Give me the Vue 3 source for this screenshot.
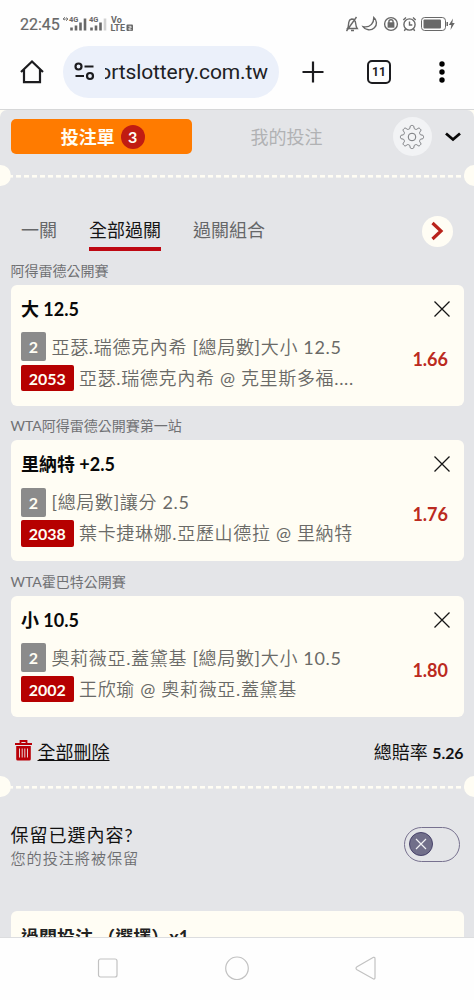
<script setup>
import { ref } from 'vue';

const tabs = ['一關', '全部過關', '過關組合'];
const activeTab = ref('全部過關');
const keepSelection = ref(false);

const bets = ref([
  {
    league: '阿得雷德公開賽',
    pick: '大 12.5',
    legs: '2',
    market: '亞瑟.瑞德克內希 [總局數]大小 12.5',
    code: '2053',
    match: '亞瑟.瑞德克內希 @ 克里斯多福....',
    odds: '1.66',
  },
  {
    league: 'WTA阿得雷德公開賽第一站',
    pick: '里納特 +2.5',
    legs: '2',
    market: '[總局數]讓分 2.5',
    code: '2038',
    match: '葉卡捷琳娜.亞歷山德拉 @ 里納特',
    odds: '1.76',
  },
  {
    league: 'WTA霍巴特公開賽',
    pick: '小 10.5',
    legs: '2',
    market: '奧莉薇亞.蓋黛基 [總局數]大小 10.5',
    code: '2002',
    match: '王欣瑜 @ 奧莉薇亞.蓋黛基',
    odds: '1.80',
  },
]);

const removeBet = (code) => {
  bets.value = bets.value.filter((bet) => bet.code !== code);
};

// gear outline with eight rounded teeth
const gearPoints = Array.from({ length: 160 }, (_, i) => {
  const angle = (i / 160) * Math.PI * 2;
  const radius = 10 + 1.6 * Math.tanh(2 * Math.cos(8 * angle));
  return `${(radius * Math.sin(angle)).toFixed(2)},${(radius * Math.cos(angle)).toFixed(2)}`;
}).join(' ');
</script>

<template>
  <div class="screen">
    <header class="status-bar">
      <span class="clock">22:45</span>
      <svg class="signals" width="74" height="20" viewBox="0 0 74 20">
        <path d="M1 5h5M3 3l-2 2 2 1M4 3.5l2 1.5-2 2" class="thin" />
        <text x="7" y="8" class="tiny">4G</text>
        <path d="M9.500 13.500v3M14 11.500v5M18.500 8.500v8M23 4.500v12" class="bar" />
        <text x="27" y="8" class="tiny">4G</text>
        <path d="M29.500 13.500v3M34 11.500v5M38.500 8.500v8" class="bar" />
        <path d="M43 4.500v12" class="bar faint" />
        <text x="49" y="9" class="volte">Vo</text>
        <text x="48.500" y="17" class="volte">LTE</text>
        <rect x="64.500" y="10.500" width="6.500" height="6.500" rx="1" fill="#686868" />
        <path d="M66.500 12.300h2.500v1.700h-2v1.800h2.500" stroke="#fff" fill="none" stroke-width=".8" />
      </svg>
      <svg class="status-icons" width="112" height="20" viewBox="0 0 112 20">
        <g class="line">
          <path d="M1.500 14.500c1.300-1.500.8-5 1.500-7 .4-1.700 1.500-2.300 2.700-2.500 3 0 3.800 2 4 4.500.2 2 .3 3.500 1.500 5zM5 16.500h3M.5 17 10.500 3" />
          <path d="M27.800 3.500c3.200 2.400 3.600 7.500.6 10.300-3.300 3.100-9 2.600-11.400-1.200 4 .8 6.500 0 8.500-2.200 1.600-1.800 2.300-4 2.300-6.900z" />
          <circle cx="45" cy="10" r="6.400" />
          <path d="M42.900 9V7.800c0-2.700 4.200-2.700 4.200 0V9" />
          <rect x="42.300" y="9" width="5.400" height="4" fill="#686868" />
          <circle cx="63.500" cy="10.500" r="5.600" />
          <path d="M63.500 7.500v3.500h2.800M57.300 6l2.700-2.500M69.700 6 67 3.500M59.500 15l-1.200 1.800M67.500 15l1.200 1.800" />
          <rect x="75.500" y="3.500" width="24" height="13" rx="3.200" stroke-width="1" />
        </g>
        <rect x="77.500" y="5.500" width="17.500" height="9" rx="1" fill="#686868" />
        <rect x="100.500" y="8" width="1.500" height="4" fill="#686868" />
        <path d="M107 4.500 102.800 11h2.500l-.8 5 4.200-7h-2.400z" fill="#686868" />
      </svg>
    </header>

    <div class="toolbar">
      <svg class="home" width="24" height="26" viewBox="0 0 24 26">
        <path d="M1 13 12 2.500l11 10.500M4 10.500v12.700h16V10.500" />
      </svg>
      <div class="address">
        <svg width="22" height="20" viewBox="0 0 22 20">
          <circle cx="4.500" cy="4.500" r="3" />
          <path d="M10.500 4.500h9M1.500 14h8.500" />
          <circle cx="16" cy="14" r="3" />
        </svg>
        <div class="url"><span>ortslottery.com.tw</span></div>
      </div>
      <svg class="plus" width="22" height="22" viewBox="0 0 22 22"><path d="M11 .5v21M.5 11h21" /></svg>
      <div class="tab-count">11</div>
      <svg class="dots" width="8" height="24" viewBox="0 0 8 24">
        <circle cx="4" cy="4" r="2.700" /><circle cx="4" cy="12" r="2.700" /><circle cx="4" cy="20" r="2.700" />
      </svg>
    </div>

    <main class="page">
      <div class="slip">
        <div class="slip-header">
          <button class="slip-button">投注單<span class="badge">3</span></button>
          <button class="my-bets">我的投注</button>
          <span class="gear">
            <svg width="26" height="26" viewBox="-13 -13 26 26">
              <polygon :points="gearPoints" />
              <circle r="3.800" />
            </svg>
          </span>
          <svg class="chevron" width="18" height="12" viewBox="0 0 18 12"><path d="m2 2.500 7 6 7-6" /></svg>
        </div>

        <div class="divider"></div>

        <nav class="tabs">
          <button
            v-for="tab in tabs"
            :key="tab"
            :class="{ active: tab === activeTab }"
            @click="activeTab = tab"
          >{{ tab }}</button>
          <span class="next">
            <svg width="14" height="20" viewBox="0 0 14 20"><path d="m1.500 2 8.500 8-8.500 8" /></svg>
          </span>
        </nav>

        <section v-for="bet in bets" :key="bet.code" class="bet">
          <div class="league">{{ bet.league }}</div>
          <div class="card">
            <div class="pick">
              <span>{{ bet.pick }}</span>
              <svg width="18" height="18" viewBox="0 0 18 18" @click="removeBet(bet.code)"><path d="m1.500 1.500 15 15m0-15-15 15" /></svg>
            </div>
            <div class="detail">
              <div class="lines">
                <div class="line-one"><span class="legs">{{ bet.legs }}</span>{{ bet.market }}</div>
                <div class="line-two"><span class="code">{{ bet.code }}</span>{{ bet.match }}</div>
              </div>
              <span class="odds">{{ bet.odds }}</span>
            </div>
          </div>
        </section>

        <div class="summary">
          <svg width="17" height="21" viewBox="0 0 17 21">
            <path d="M5.500 3V1h6v2M0 4h17" stroke="#b90007" stroke-width="1.800" fill="none" />
            <path d="M1.200 6h14.600v13q0 1.500-1.500 1.500H2.700q-1.500 0-1.500-1.500z" fill="#b90007" />
            <path d="M4.500 8.500v9M7.200 8.500v9M9.800 8.500v9M12.500 8.500v9" stroke="#e6d2d3" stroke-width="1" />
          </svg>
          <a>全部刪除</a>
          <div class="total">總賠率 <b>5.26</b></div>
        </div>

        <div class="divider"></div>

        <div class="keep">
          <div>
            <div class="keep-title">保留已選內容?</div>
            <div class="keep-note">您的投注將被保留</div>
          </div>
          <div class="toggle" :class="{ on: keepSelection }" @click="keepSelection = !keepSelection">
            <span class="knob">
              <svg width="12" height="12" viewBox="0 0 12 12"><path d="m1 1 10 10m0-10L1 11" /></svg>
            </span>
          </div>
        </div>

        <div class="stake">過關投注 （選擇）x1</div>
      </div>
    </main>

    <footer class="nav-bar">
      <svg width="22" height="24" viewBox="0 0 22 24"><rect x="1.500" y="3" width="18.500" height="18" rx="2" /></svg>
      <svg width="24" height="24" viewBox="0 0 24 24"><circle cx="12" cy="12.300" r="11.300" /></svg>
      <svg width="22" height="24" viewBox="0 0 22 24"><path d="M18.500 1.300 2 10.800q-2 1.500 0 3l16.500 9.200q1.500.3 1.500-1.500V2.800q0-1.800-1.500-1.500z" /></svg>
    </footer>
  </div>
</template>

<style>
body {
  margin: 0;
}
</style>

<style scoped>
.screen {
  display: flex;
  flex-direction: column;
  width: 474px;
  height: 1000px;
  overflow: hidden;
  background: #fefefe;
  font-family: Lato, "Noto Sans CJK TC", sans-serif;
  font-size: 18px;
  color: #111;
}

svg {
  flex: none;
  display: block;
}

button {
  padding: 0;
  border: 0;
  background: none;
  font: inherit;
}

.status-bar {
  display: flex;
  align-items: center;
  box-sizing: border-box;
  height: 46px;
  padding: 2px 16px 0 20px;
  color: #686868;
  font-family: Roboto, sans-serif;
}

.clock {
  width: 42px;
  font-size: 16px;
  -webkit-text-stroke: 0.2px #686868;
}

.signals text {
  fill: #686868;
  font-family: Roboto, sans-serif;
  font-weight: 700;
}

.tiny {
  font-size: 7.5px;
}

.volte {
  font-size: 9px;
}

.thin {
  fill: none;
  stroke: #686868;
  stroke-width: 0.8;
}

.bar {
  stroke: #686868;
  stroke-width: 2.6;
}

.faint {
  stroke: #d2d2d2;
}

.status-icons {
  margin-left: auto;
}

.line {
  fill: none;
  stroke: #686868;
  stroke-width: 1.4;
}

.toolbar {
  display: flex;
  align-items: center;
  box-sizing: border-box;
  height: 63px;
  padding: 0 28px 11px 20px;
}

.toolbar path,
.address circle {
  fill: none;
  stroke: #1c1c1f;
  stroke-width: 2.2;
}

.address {
  display: flex;
  align-items: center;
  box-sizing: border-box;
  width: 216px;
  height: 52px;
  margin-left: 19px;
  padding: 0 11px;
  border-radius: 26px;
  background: #ebf0fa;
}

.url {
  display: flex;
  justify-content: flex-end;
  width: 163px;
  margin-left: 9px;
  overflow: hidden;
  font-family: Roboto, sans-serif;
  font-size: 21px;
  letter-spacing: -0.1px;
  color: #202124;
}

.plus {
  margin-left: 23px;
}

.tab-count {
  display: flex;
  align-items: center;
  justify-content: center;
  box-sizing: border-box;
  width: 24px;
  height: 24px;
  margin-left: 43px;
  border: 2.2px solid #1c1c1f;
  border-radius: 5px;
  font: 700 12px Roboto, sans-serif;
  color: #1c1c1f;
}

.dots {
  margin-left: auto;
}

.page {
  flex: 1;
  min-height: 0;
  overflow: hidden;
  border-top: 1px solid #d6d7d8;
  background: #fffdf4;
}

.slip {
  display: flex;
  flex-direction: column;
  height: 100%;
  border-radius: 7px 7px 0 0;
  background: #e4e5e8;
}

.slip-header {
  flex: none;
  display: flex;
  align-items: center;
  height: 53px;
  margin-bottom: 1.5px;
  padding: 0 12px 0 10.5px;
}

.slip-button {
  display: flex;
  align-items: center;
  justify-content: center;
  box-sizing: border-box;
  width: 181.5px;
  height: 35px;
  padding-left: 3px;
  border-radius: 5px;
  background: #ff7b00;
  color: #fffdf4;
  font-weight: 700;
  line-height: 34px;
}

.badge {
  width: 24px;
  height: 24px;
  margin-left: 6px;
  border-radius: 50%;
  background: #c01c12;
  font-size: 16px;
  line-height: 24px;
}

.my-bets {
  width: 189px;
  line-height: 34px;
  color: #b1b2b4;
}

.gear {
  display: flex;
  align-items: center;
  justify-content: center;
  width: 39px;
  height: 39px;
  margin-left: 11.5px;
  border-radius: 50%;
  background: #f2f3f5;
}

.gear polygon,
.gear circle {
  fill: none;
  stroke: #74767a;
  stroke-linejoin: round;
}

.chevron {
  margin: 1px 0 0 auto;
}

.chevron path {
  fill: none;
  stroke: #080808;
  stroke-width: 2.8;
}

.divider {
  flex: none;
  display: flex;
  align-items: center;
  justify-content: space-between;
  height: 21px;
  background: repeating-linear-gradient(90deg, #fffdf4 0 5px, transparent 5px 8px) 0 10.5px / 100% 2.6px no-repeat;
}

.divider::before,
.divider::after {
  content: '';
  width: 10.5px;
  height: 21px;
  border-radius: 0 11px 11px 0;
  background: #fffdf4;
}

.divider::after {
  border-radius: 11px 0 0 11px;
}

.tabs {
  flex: none;
  display: flex;
  align-items: flex-start;
  gap: 32px;
  height: 43px;
  margin-top: 27px;
  padding: 0 21px;
}

.tabs button {
  height: 38px;
  border-bottom: 4px solid transparent;
  line-height: 34px;
  color: #666769;
}

.tabs .active {
  border-bottom-color: #be0812;
  color: #151515;
}

.next {
  display: flex;
  align-items: center;
  justify-content: center;
  width: 31px;
  height: 31px;
  margin: 3px 0 0 auto;
  border-radius: 50%;
  background: #fffdf4;
}

.next path {
  fill: none;
  stroke: #b9221a;
  stroke-width: 3.2;
}

.bet {
  flex: none;
  height: 155.5px;
  padding: 0 10.5px;
}

.league {
  height: 29.3px;
  font-size: 14px;
  line-height: 29px;
  color: #707174;
}

.card {
  box-sizing: border-box;
  height: 121px;
  padding: 10px 10.5px 0;
  border-radius: 6px;
  background: #fffdf4;
}

.pick {
  display: flex;
  align-items: center;
  justify-content: space-between;
  height: 28px;
  padding-right: 2px;
  font-weight: 700;
  color: #090909;
}

.pick span {
  line-height: 26px;
}

.pick path {
  fill: none;
  stroke: #151515;
  stroke-width: 1.3;
}

.detail {
  display: flex;
  align-items: center;
  justify-content: space-between;
  margin-top: 9.5px;
  padding-right: 5px;
}

.line-one,
.line-two {
  display: flex;
  align-items: center;
  height: 29px;
  font-family: Lato, "Noto Sans CJK TC DemiLight", "Noto Sans CJK TC Light", "Noto Sans CJK TC", sans-serif;
  line-height: 26px;
  letter-spacing: 0.67px;
  white-space: pre;
  color: #6a6a67;
}

.line-two {
  height: 27px;
  margin-top: 3px;
}

.legs,
.code {
  width: 25px;
  height: 29px;
  margin-right: 5.5px;
  border-radius: 2px;
  background: #8b8b8b;
  color: #fffdf4;
  font-size: 16px;
  font-weight: 700;
  line-height: 30px;
  letter-spacing: 0;
  text-align: center;
}

.code {
  width: 52.5px;
  height: 26.5px;
  background: #b60000;
  line-height: 27px;
}

.odds {
  margin-top: -6px;
  color: #bb2a20;
  font-weight: 700;
}

.summary {
  flex: none;
  display: flex;
  align-items: center;
  height: 40px;
  margin-top: 8.5px;
  padding: 0 10.5px 0 14.5px;
}

.summary a {
  margin-left: 6px;
  text-decoration: underline;
  text-decoration-thickness: 1px;
}

.total {
  margin-left: auto;
}

.total b {
  font-size: 15.8px;
}

.summary + .divider {
  margin-top: 5px;
}

.keep {
  flex: none;
  display: flex;
  justify-content: space-between;
  height: 90px;
  margin-top: 24.5px;
  padding: 0 14.5px 0 10.5px;
}

.keep-title {
  padding-top: 1px;
  line-height: 27px;
  letter-spacing: 1px;
}

.keep-note {
  font-family: Lato, "Noto Sans CJK TC DemiLight", "Noto Sans CJK TC Light", "Noto Sans CJK TC", sans-serif;
  font-size: 15.2px;
  line-height: 19px;
  letter-spacing: 0.9px;
  color: #6e6f72;
}

.toggle {
  display: flex;
  align-items: center;
  box-sizing: border-box;
  width: 55.5px;
  height: 34.5px;
  margin-top: 6px;
  padding-left: 4px;
  border: 1.4px solid #77718f;
  border-radius: 18px;
}

.toggle.on {
  justify-content: flex-end;
  padding: 0 4px 0 0;
}

.knob {
  display: flex;
  align-items: center;
  justify-content: center;
  box-sizing: border-box;
  width: 24px;
  height: 24px;
  border: 1.5px solid #48436b;
  border-radius: 50%;
  background: #716f8a;
}

.knob path {
  fill: none;
  stroke: #f1f1f5;
  stroke-width: 1.2;
}

.stake {
  flex: none;
  height: 60px;
  margin: 0 10.5px;
  padding: 12px 10.5px 0;
  border-radius: 6px 6px 0 0;
  background: #fffdf4;
  font-weight: 700;
  color: #222;
}

.nav-bar {
  flex: none;
  display: flex;
  justify-content: center;
  box-sizing: border-box;
  height: 63px;
  padding-top: 18px;
  gap: 106px;
  border-top: 1px solid #dcdddf;
}

.nav-bar rect,
.nav-bar circle,
.nav-bar path {
  fill: none;
  stroke: #c2c2c2;
  stroke-width: 1.2;
}
</style>
